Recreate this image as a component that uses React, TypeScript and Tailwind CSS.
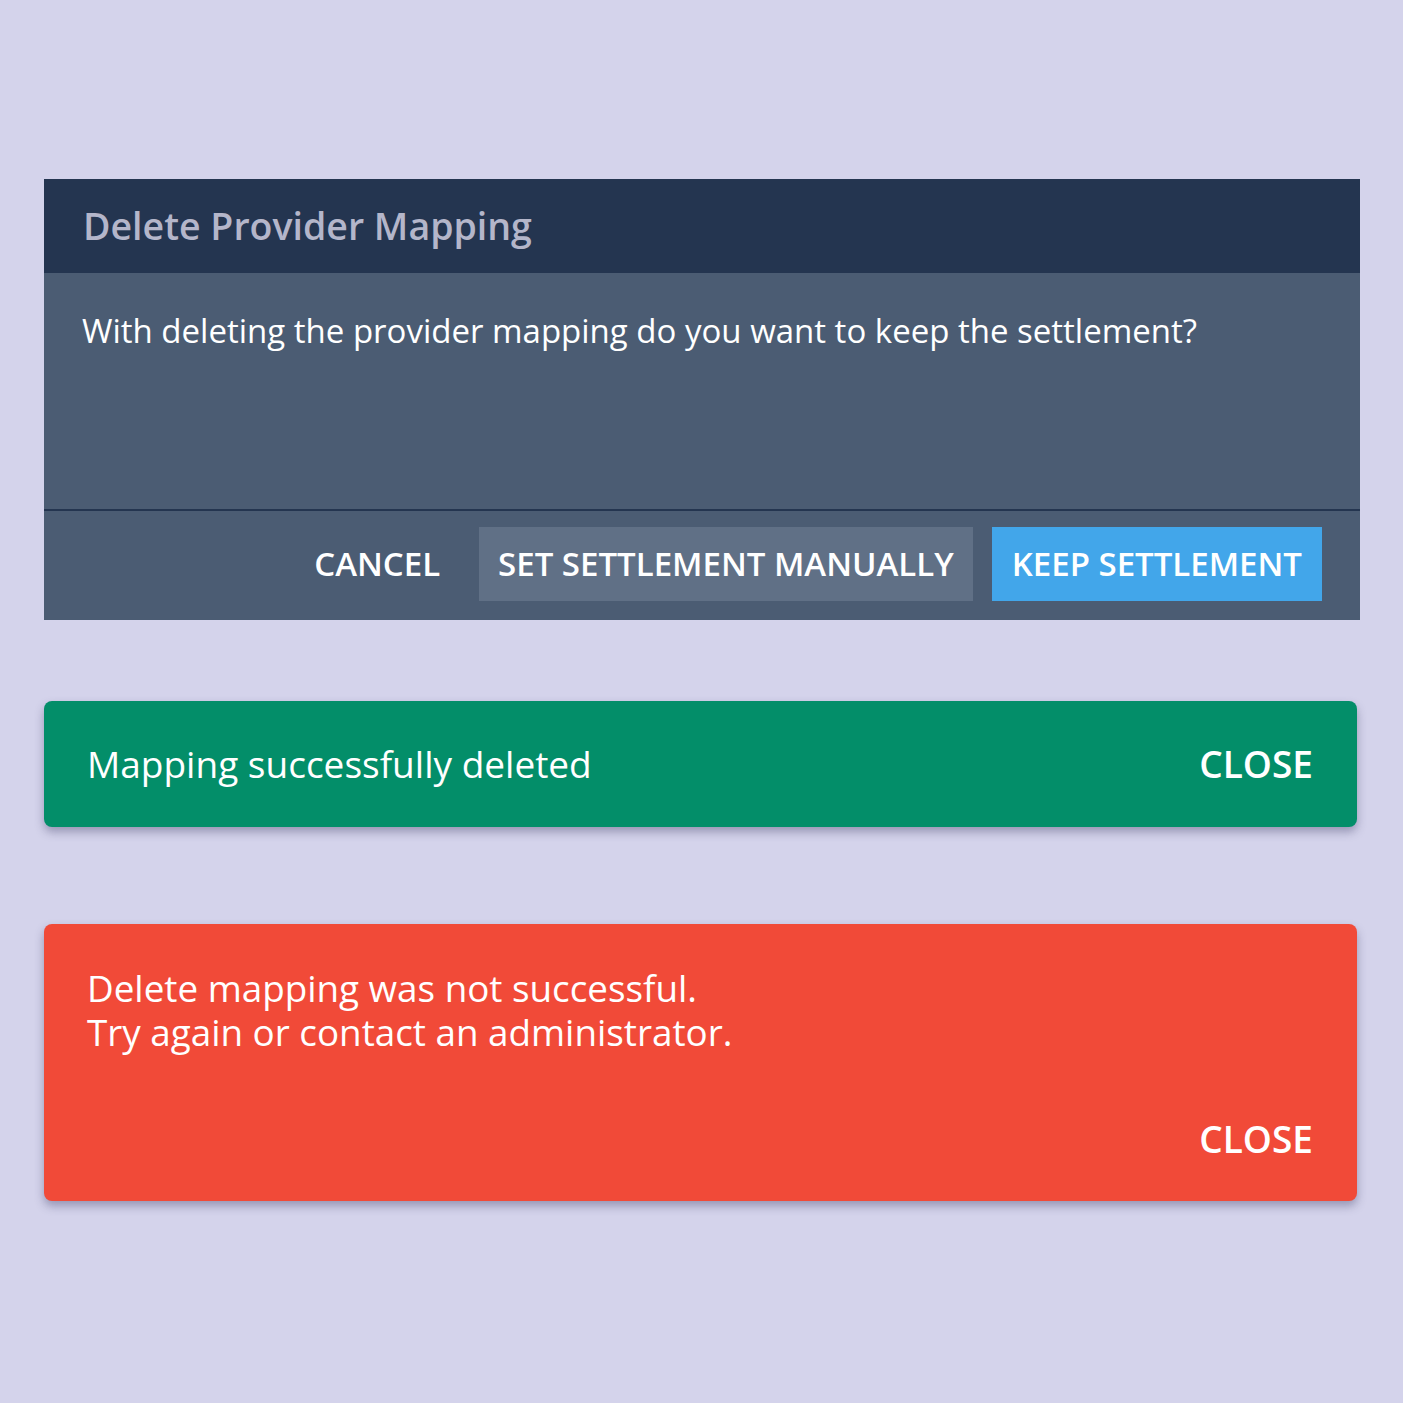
import React from 'react';

const font = { fontFamily: '"Open Sans", "Noto Sans", sans-serif' };

const Dialog: React.FC = () => (
  <div className="w-[1316px] bg-[#4b5c73]">
    <div className="h-[94px] bg-[#243550] flex items-center px-[39px]">
      <h2 className="text-[37.5px] font-semibold text-[#b4b6ca]">Delete Provider Mapping</h2>
    </div>
    <div className="h-[236px] px-[38px] pt-[36px]">
      <p className="text-[33px] leading-[44px] text-white">
        With deleting the provider mapping do you want to keep the settlement?
      </p>
    </div>
    <div className="border-t-2 border-[#243550] flex items-center justify-end gap-[19px] pt-[16px] pb-[19px] pr-[38px]">
      <button className="h-[74px] px-[20px] text-[33px] font-semibold text-white">CANCEL</button>
      <button className="h-[74px] px-[19px] text-[33px] font-semibold text-white bg-[#607086]">
        SET SETTLEMENT MANUALLY
      </button>
      <button className="h-[74px] px-[20px] text-[33px] font-semibold text-white bg-[#42a6ea]">
        KEEP SETTLEMENT
      </button>
    </div>
  </div>
);

const App: React.FC = () => {
  return (
    <div className="min-h-[1403px] bg-[#d4d3eb] pt-[179px] pl-[44px]" style={font}>
      <Dialog />

      <div className="mt-[81px] w-[1313px] h-[126px] rounded-[8px] bg-[#038e69] shadow-[0_5px_10px_rgba(60,60,100,0.4)] flex items-center justify-between pl-[43px] pr-[44px]">
        <span className="text-[37px] text-white">Mapping successfully deleted</span>
        <span className="text-[37px] font-semibold text-white">CLOSE</span>
      </div>

      <div className="mt-[97px] w-[1313px] h-[277px] rounded-[8px] bg-[#f14a38] shadow-[0_5px_10px_rgba(60,60,100,0.4)] flex flex-col justify-between pl-[43px] pr-[44px] pt-[42px] pb-[40px]">
        <div className="text-[36.8px] leading-[44px] text-white">
          <p>Delete mapping was not successful.</p>
          <p>Try again or contact an administrator.</p>
        </div>
        <div className="flex justify-end">
          <span className="text-[37px] leading-[44px] font-semibold text-white">CLOSE</span>
        </div>
      </div>
    </div>
  );
};

export default App;
